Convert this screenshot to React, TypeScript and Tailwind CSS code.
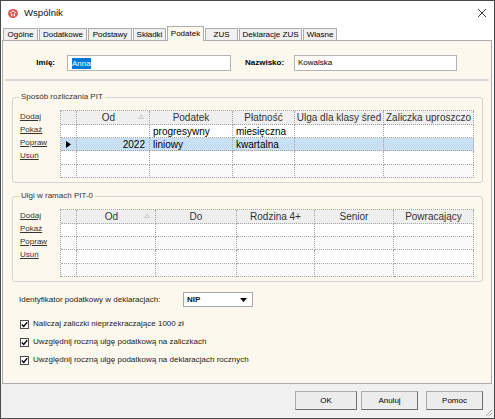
import React from "react";

type GridProps = {
    cols: string;
    headers: string[];
    rows: string[][];
    align: ("left" | "right" | "center")[];
    selected?: number;
};

const line = "border-dotted border-[#a3a3a3]";
const rowHeights = ["h-[13px]", "h-[13px]", "h-[14px]", "h-[13px]"];

function SortArrow() {
    return (
        <svg width="6" height="5" viewBox="0 0 6 5" className="shrink-0">
            <path d="M0.5 4.5 L3 0.8 L5.5 4.5 Z" fill="none" stroke="#c4c4c4" strokeWidth="0.8" />
        </svg>
    );
}

function Grid({ cols, headers, rows, align, selected }: GridProps) {
    return (
        <div className={`grid ${cols} border-t border-l ${line} text-[10px] text-black font-['Liberation_Sans',Arial,sans-serif]`}>
            {/* header */}
            {headers.map((h, i) =>
                i === 1 ? (
                    <div
                        key={"h" + i}
                        className={`h-[14px] flex items-center bg-[#efefef] border-r border-b ${line} overflow-hidden whitespace-nowrap text-[#333] pl-[2px]`}
                    >
                        <span className="flex-1 text-center">{h}</span>
                        <span className="mr-[5px] mb-[2px]">
                            <SortArrow />
                        </span>
                    </div>
                ) : (
                    <div
                        key={"h" + i}
                        className={`h-[14px] leading-[13px] text-center bg-[#efefef] border-r border-b ${line} overflow-hidden whitespace-nowrap text-[#333] px-[1px]`}
                    >
                        {h}
                    </div>
                )
            )}

            {/* rows */}
            {rows.map((r, ri) =>
                r.map((c, ci) => {
                    const bg =
                        ri === selected
                            ? "bg-[#c9e0f4]"
                            : ri % 2 === 1
                            ? "bg-[#f9f9f9]"
                            : "bg-white";
                    const al =
                        align[ci] === "right"
                            ? "justify-end pr-[4px]"
                            : align[ci] === "center"
                            ? "justify-center"
                            : "justify-start pl-[3px]";
                    return (
                        <div
                            key={ri + "-" + ci}
                            className={`${rowHeights[ri]} ${bg} flex items-center ${al} border-r border-b ${line} overflow-hidden whitespace-nowrap`}
                        >
                            {ci === 0 && ri === selected ? (
                                <svg width="5" height="7" viewBox="0 0 5 7">
                                    <path d="M0 0 L5 3.5 L0 7 Z" fill="#000" />
                                </svg>
                            ) : (
                                c
                            )}
                        </div>
                    );
                })
            )}
        </div>
    );
}

function Links() {
    return (
        <div className="w-[40px] flex flex-col text-[8px] leading-[13px] text-[#333]">
            <a className="underline underline-offset-1">Dodaj</a>
            <a className="underline underline-offset-1">Pokaż</a>
            <a className="underline underline-offset-1">Popraw</a>
            <a className="underline underline-offset-1">Usuń</a>
        </div>
    );
}

function Group({ title, children }: { title: string; children: React.ReactNode }) {
    return (
        <fieldset className="ml-[9px] w-[471px] border border-[#d3d3d3] rounded-[3px]">
            <legend className="ml-[6px] px-[2px] text-[8px] leading-[12px] text-[#333]">
                {title}
            </legend>
            <div className="flex pl-[7px] pr-[8px] pt-[7px] pb-[4px]">{children}</div>
        </fieldset>
    );
}

function Check({ label }: { label: string }) {
    return (
        <div className="h-[18px] flex items-center pl-[17px]">
            <div className="w-[9px] h-[9px] border border-[#4d4d4d] bg-white flex items-center justify-center">
                <svg width="7" height="7" viewBox="0 0 7 7">
                    <path d="M0.8 3.6 L2.7 5.5 L6.2 1.3" fill="none" stroke="#000" strokeWidth="1.4" />
                </svg>
            </div>
            <span className="ml-[4px] text-[8px] text-[#222]">{label}</span>
        </div>
    );
}

const tabs = [
    { name: "Ogólne", w: "w-[35px]" },
    { name: "Dodatkowe", w: "w-[48px]" },
    { name: "Podstawy", w: "w-[44px]" },
    { name: "Składki", w: "w-[33px]" },
    { name: "Podatek", w: "w-[37px]", active: true },
    { name: "ZUS", w: "w-[33px]" },
    { name: "Deklaracje ZUS", w: "w-[63px]" },
    { name: "Własne", w: "w-[34px]" },
];

export default function App() {
    return (
        <div className="w-[495px] h-[419px] border border-[#4a4a4a] bg-white flex flex-col overflow-hidden font-['Liberation_Sans',Arial,sans-serif] text-black">
            {/* TITLE BAR */}
            <div className="h-[24px] shrink-0 flex items-center pl-[7px]">
                <svg width="10" height="9" viewBox="0 0 10 9">
                    <ellipse cx="5" cy="4.5" rx="5" ry="4.5" fill="#d9534f" />
                    <path d="M1.8 4.2 L5 1.8 L8.2 4.2" fill="none" stroke="#fff" strokeWidth="0.9" />
                    <rect x="3" y="4.6" width="1.3" height="2.6" fill="#fff" />
                    <rect x="5.7" y="4.6" width="1.3" height="2.6" fill="#fff" />
                </svg>
                <span className="ml-[6px] text-[9.6px] text-[#111]">Wspólnik</span>
                <svg width="10" height="10" viewBox="0 0 10 10" className="ml-auto mr-[7px]">
                    <path d="M1 1 L9 9 M9 1 L1 9" stroke="#222" strokeWidth="0.9" />
                </svg>
            </div>

            {/* TABS */}
            <div className="h-[15px] shrink-0 flex items-end pl-[2px] gap-[1px] text-[8px]">
                {tabs.map((t) => (
                    <div
                        key={t.name}
                        className={
                            t.active
                                ? `${t.w} h-[15px] -mb-px relative z-10 border border-b-0 border-[#acacac] bg-[#fdf8ed] flex items-center justify-center whitespace-nowrap`
                                : `${t.w} h-[12px] border border-b-0 border-[#acacac] bg-[#f0f0f0] flex items-center justify-center whitespace-nowrap`
                        }
                    >
                        {t.name}
                    </div>
                ))}
            </div>

            {/* PANEL */}
            <div className="flex-1 ml-[1px] mr-[2px] border border-[#acacac] bg-[#fdf8ed]">
                {/* name row */}
                <div className="pt-[14px] flex items-center text-[8px]">
                    <span className="w-[52px] text-right font-bold">Imię:</span>
                    <div className="ml-[12px] w-[164px] h-[16px] border border-[#b4b4b4] bg-white flex items-center pl-[4px]">
                        <span className="bg-[#0078d7] text-white leading-[11px]">Anna</span>
                    </div>
                    <span className="ml-[14px] w-[49px] font-bold">Nazwisko:</span>
                    <div className="w-[163px] h-[16px] border border-[#b4b4b4] bg-white flex items-center pl-[3px]">
                        Kowalska
                    </div>
                </div>

                <div className="mt-[8px] mx-[2px] h-[2px] bg-[#dadada]" />

                {/* PIT */}
                <div className="mt-[10px]">
                    <Group title="Sposób rozliczania PIT">
                        <Links />
                        <Grid
                            cols="grid-cols-[16px_73px_83px_62px_89px_90px]"
                            headers={["", "Od", "Podatek", "Płatność", "Ulga dla klasy śred", "Zaliczka uproszczo"]}
                            align={["center", "right", "left", "left", "left", "left"]}
                            selected={1}
                            rows={[
                                ["", "", "progresywny", "miesięczna", "", ""],
                                ["", "2022", "liniowy", "kwartalna", "", ""],
                                ["", "", "", "", "", ""],
                                ["", "", "", "", "", ""],
                            ]}
                        />
                    </Group>
                </div>

                {/* PIT-0 */}
                <div className="mt-[7px]">
                    <Group title="Ulgi w ramach PIT-0">
                        <Links />
                        <Grid
                            cols="grid-cols-[16px_79px_81px_78px_79px_80px]"
                            headers={["", "Od", "Do", "Rodzina 4+", "Senior", "Powracający"]}
                            align={["center", "right", "left", "left", "left", "left"]}
                            rows={[
                                ["", "", "", "", "", ""],
                                ["", "", "", "", "", ""],
                                ["", "", "", "", "", ""],
                                ["", "", "", "", "", ""],
                            ]}
                        />
                    </Group>
                </div>

                {/* identyfikator */}
                <div className="mt-[10px] pl-[16px] flex items-center text-[8px] text-[#222]">
                    <span className="w-[164px]">Identyfikator podatkowy w deklaracjach:</span>
                    <div className="w-[70px] h-[15px] border border-[#a8a8a8] bg-white flex items-center pl-[3px]">
                        <span className="font-bold text-[#111]">NIP</span>
                        <svg width="7" height="4" viewBox="0 0 7 4" className="ml-auto mr-[5px]">
                            <path d="M0 0 L7 0 L3.5 4 Z" fill="#000" />
                        </svg>
                    </div>
                </div>

                <div className="mt-[8px]">
                    <Check label="Naliczaj zaliczki nieprzekraczające 1000 zł" />
                    <Check label="Uwzględnij roczną ulgę podatkową na zaliczkach" />
                    <Check label="Uwzględnij roczną ulgę podatkową na deklaracjach rocznych" />
                </div>
            </div>

            {/* BUTTONS */}
            <div className="h-[34px] shrink-0 relative bg-[#f0f0f0] flex justify-end items-start pt-[7px] pr-[11px] text-[8px]">
                <button className="w-[62px] h-[19px] bg-[#ececec] border border-[#adadad] border-r-[#6f6f6f] border-b-[#6f6f6f]">
                    OK
                </button>
                <button className="ml-[4px] w-[57px] h-[19px] bg-[#ececec] border border-[#adadad] border-r-[#6f6f6f] border-b-[#6f6f6f]">
                    Anuluj
                </button>
                <button className="ml-[8px] w-[57px] h-[19px] bg-[#ececec] border border-[#adadad] border-r-[#6f6f6f] border-b-[#6f6f6f]">
                    Pomoc
                </button>
                <svg width="9" height="9" viewBox="0 0 9 9" className="absolute right-[1px] bottom-[1px]">
                    <path d="M8 2 L2 8 M8 5 L5 8" stroke="#a0a0a0" strokeWidth="0.9" />
                </svg>
            </div>
        </div>
    );
}
